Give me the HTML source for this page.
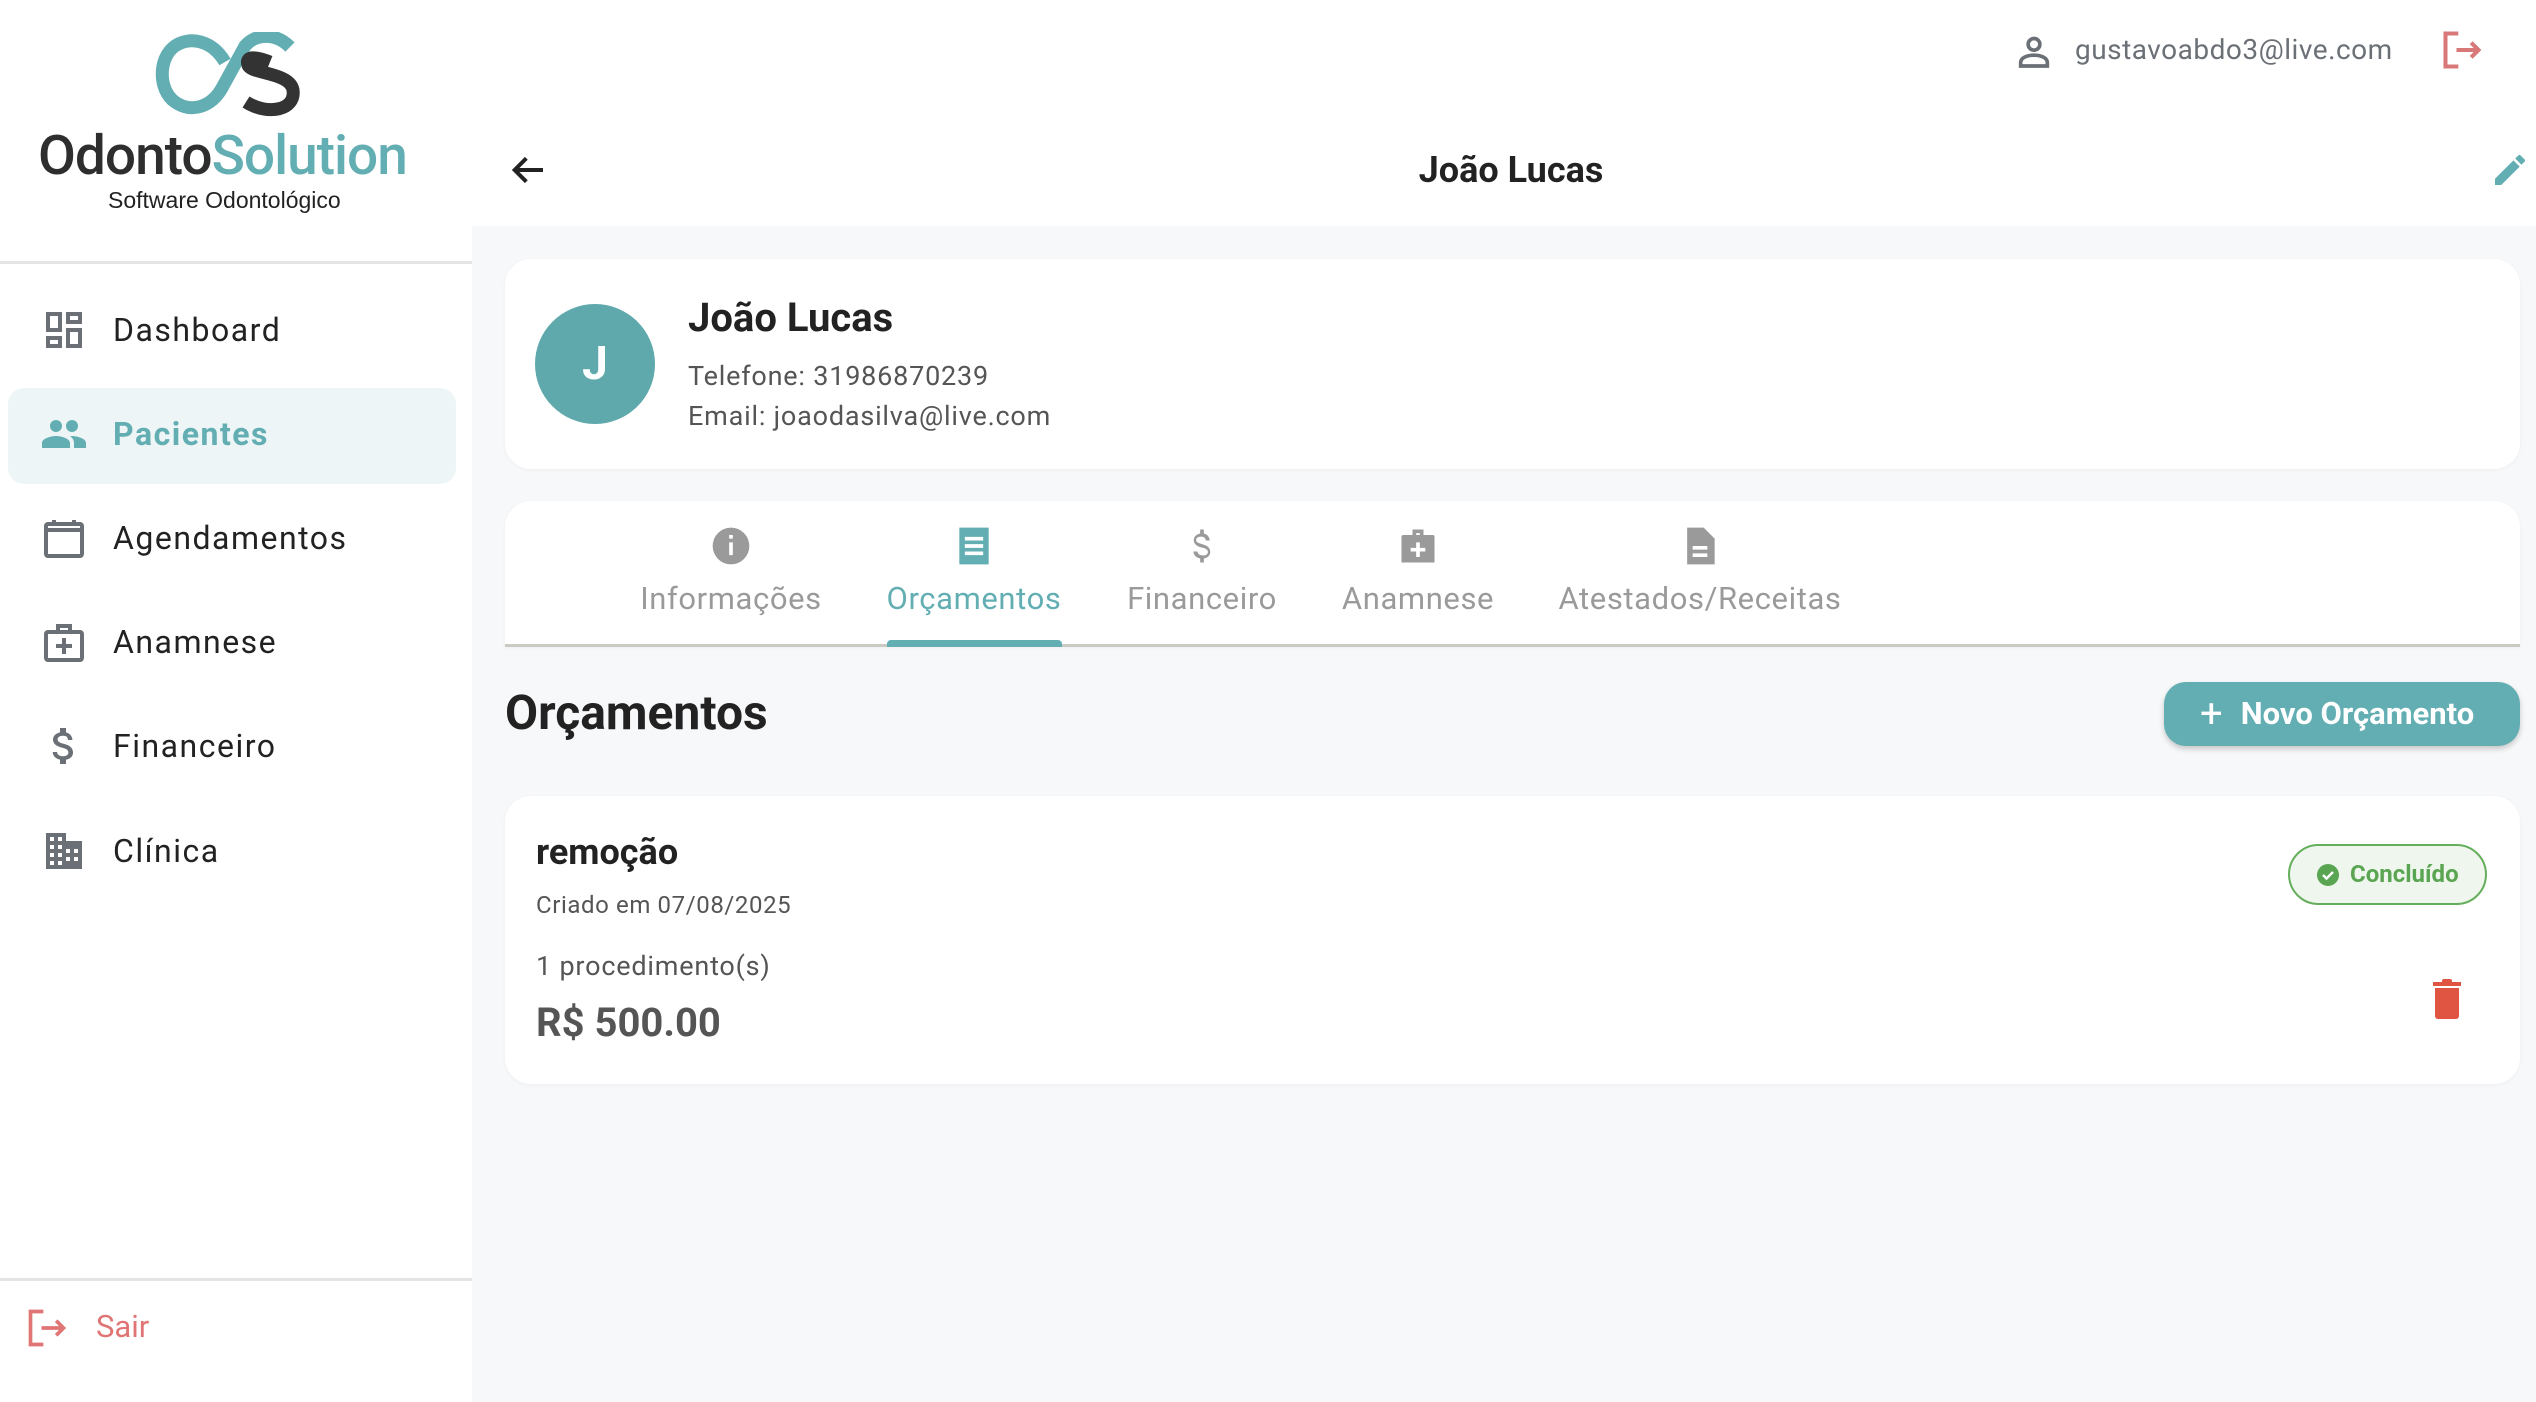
<!DOCTYPE html>
<html><head><meta charset="utf-8"><style>
*{box-sizing:border-box;margin:0;padding:0}
body{width:2536px;height:1402px;position:relative;overflow:hidden;background:#f7f8fa;font-family:"Roboto","Liberation Sans",sans-serif;color:#222}
.a{position:absolute}
#side{left:0;top:0;width:472px;height:1402px;background:#fff}
.nav{position:absolute;left:0;width:472px;height:96px;display:flex;align-items:center;font-size:32px;letter-spacing:1.5px;color:#222}
.nav svg{position:absolute;left:40px;width:48px;height:48px}
.nav span{position:absolute;left:113px}
.card{position:absolute;background:#fff;border-radius:26px;box-shadow:0 1px 4px rgba(0,0,0,.04)}
.tab{position:absolute;top:524px;width:400px;text-align:center;font-size:31px;letter-spacing:0.6px;color:#9a9a9a}
.tab svg{display:block;margin:0 auto 12px;width:44px;height:44px}
</style></head><body>
<div id="side" class="a">
 <svg class="a" style="left:150px;top:32px" width="150" height="85" viewBox="0 0 150 85">
  <path d="M75 30 C62 8 40 4 25 14 C8 26 8 58 25 70 C42 82 62 74 72 56 L95 14 C105 2 125 0 140 15" fill="none" stroke="#62AEB3" stroke-width="13"/>
  <path d="M120 30 C105 24 95 24 98 33 C100 42 140 40 143 58 C146 78 118 84 96 70" fill="none" stroke="#333" stroke-width="13"/>
 </svg>
 <div class="a" style="left:38px;top:124px;font-size:55px;font-weight:500;letter-spacing:-1px;line-height:64px"><span style="color:#2e2e2e">Odonto</span><span style="color:#62AEB3">Solution</span></div>
 <div class="a" style="left:108px;top:187px;font-size:23px;color:#222;font-family:'Liberation Sans',sans-serif">Software Odontológico</div>
 <div class="a" style="left:0;top:261px;width:472px;height:3px;background:#e4e4e4"></div>
 <div class="nav" style="top:282px"><svg viewBox="0 0 24 24" fill="none" stroke="#6b7077" stroke-width="2"><rect x="4" y="4" width="6" height="8"/><rect x="4" y="16" width="6" height="4"/><rect x="14" y="4" width="6" height="4"/><rect x="14" y="12" width="6" height="8"/></svg><span>Dashboard</span></div>
 <div class="a" style="left:8px;top:388px;width:448px;height:96px;border-radius:16px;background:#edf5f6"></div>
 <div class="nav" style="top:386px;color:#62AEB3;font-weight:bold"><svg viewBox="0 0 24 24" fill="#62AEB3"><path d="M16 11c1.66 0 3-1.34 3-3s-1.34-3-3-3-3 1.34-3 3 1.34 3 3 3zm-8 0c1.66 0 3-1.34 3-3S9.66 5 8 5 5 6.34 5 8s1.34 3 3 3zm0 2c-2.33 0-7 1.17-7 3.5V19h14v-2.5C15 14.17 10.33 13 8 13zm8 0c-.29 0-.62.02-.97.05 1.16.84 1.97 1.97 1.97 3.45V19h6v-2.5c0-2.33-4.67-3.5-7-3.5z"/></svg><span>Pacientes</span></div>
 <div class="nav" style="top:490px"><svg viewBox="0 0 24 24"><rect x="3" y="5" width="18" height="16" rx="1" fill="none" stroke="#6b7077" stroke-width="2"/><path d="M3 8h18M7 3v3M17 3v3" stroke="#6b7077" stroke-width="2"/></svg><span>Agendamentos</span></div>
 <div class="nav" style="top:594px"><svg viewBox="0 0 24 24"><rect x="3" y="7" width="18" height="14" rx="1" fill="none" stroke="#6b7077" stroke-width="2"/><path d="M9 7V4h6v3M12 10v8M8 14h8" fill="none" stroke="#6b7077" stroke-width="2"/></svg><span>Anamnese</span></div>
 <div class="nav" style="top:698px"><svg viewBox="0 0 24 24" fill="#6b7077"><path d="M11.8 10.9c-2.27-.59-3-1.2-3-2.15 0-1.09 1.01-1.85 2.7-1.85 1.78 0 2.44.85 2.5 2.1h2.21c-.07-1.72-1.12-3.3-3.21-3.81V3h-3v2.16c-1.94.42-3.5 1.68-3.5 3.61 0 2.31 1.91 3.46 4.7 4.13 2.5.6 3 1.48 3 2.41 0 .69-.49 1.79-2.7 1.79-2.06 0-2.87-.92-2.98-2.1h-2.2c.12 2.19 1.76 3.42 3.68 3.83V21h3v-2.15c1.95-.37 3.5-1.5 3.5-3.55 0-2.84-2.43-3.81-4.7-4.4z"/></svg><span>Financeiro</span></div>
 <div class="nav" style="top:803px"><svg viewBox="0 0 24 24" fill="#6b7077"><path d="M3 3h10v4h8v14H3zM5 5v2h2V5zm4 0v2h2V5zM5 9v2h2V9zm4 0v2h2V9zm4 2v2h2v-2zm4 0v2h2v-2zM5 13v2h2v-2zm4 0v2h2v-2zm4 2v2h2v-2zm4 0v2h2v-2zM5 17v2h2v-2zm4 0v2h2v-2z" fill-rule="evenodd"/></svg><span>Clínica</span></div>
 <div class="a" style="left:0;top:1278px;width:472px;height:3px;background:#e4e4e4"></div>
 <svg class="a" style="left:25px;top:1306px" width="44" height="44" viewBox="0 0 24 24" fill="none" stroke="#e07575" stroke-width="2"><path d="M10 3H3v18h7M9 12h12M17 8l4 4-4 4"/></svg>
 <div class="a" style="left:96px;top:1308px;font-size:31px;color:#e07575">Sair</div>
</div>
<div class="a" style="left:472px;top:0;width:2064px;height:226px;background:#fff"></div>
<svg class="a" style="left:2014px;top:31px" width="40" height="40" viewBox="0 0 24 24" fill="none" stroke="#6b7077" stroke-width="2.2"><circle cx="12" cy="8" r="3.5"/><path d="M4 21v-2c0-3 4-4.5 8-4.5s8 1.5 8 4.5v2z"/></svg>
<div class="a" style="left:2075px;top:33px;font-size:28px;letter-spacing:0.5px;color:#6b7077">gustavoabdo3@live.com</div>
<svg class="a" style="left:2440px;top:28px" width="44" height="44" viewBox="0 0 24 24" fill="none" stroke="#d97878" stroke-width="2.2"><path d="M10 3H3v18h7M9 12h12M17 8l4 4-4 4"/></svg>
<svg class="a" style="left:508px;top:150px" width="40" height="40" viewBox="0 0 24 24" fill="none" stroke="#222" stroke-width="2.4"><path d="M21 12H4M11 5l-7 7 7 7"/></svg>
<div class="a" style="left:1311px;top:149px;width:400px;text-align:center;font-size:36px;font-weight:bold;color:#222">João Lucas</div>
<svg class="a" style="left:2490px;top:150px" width="40" height="40" viewBox="0 0 24 24" fill="#62AEB3"><path d="M3 17.25V21h3.75L17.81 9.94l-3.75-3.75L3 17.25zM20.71 7.04a1 1 0 000-1.41l-2.34-2.34a1 1 0 00-1.41 0l-1.83 1.83 3.75 3.75 1.83-1.83z"/></svg>

<div class="card" style="left:505px;top:259px;width:2015px;height:210px"></div>
<div class="a" style="left:535px;top:304px;width:120px;height:120px;border-radius:50%;background:#5fa9ac;color:#fff;font-size:46px;font-weight:bold;text-align:center;line-height:120px">J</div>
<div class="a" style="left:688px;top:294px;font-size:40px;font-weight:bold;color:#222">João Lucas</div>
<div class="a" style="left:688px;top:360px;font-size:27px;letter-spacing:0.8px;color:#555">Telefone: 31986870239</div>
<div class="a" style="left:688px;top:400px;font-size:27px;letter-spacing:0.8px;color:#555">Email: joaodasilva@live.com</div>

<div class="card" style="left:505px;top:501px;width:2015px;height:146px;border-radius:26px 26px 0 0"></div>
<div class="a" style="left:505px;top:644px;width:2015px;height:3px;background:#c9cbc3"></div>
<div class="tab" style="left:531px"><svg viewBox="0 0 24 24" fill="#9a9a9a"><circle cx="12" cy="12" r="10"/><path d="M11 10h2v7h-2zM11 6h2v2h-2z" fill="#fff"/></svg>Informações</div>
<div class="tab" style="left:774px;color:#62AEB3"><svg viewBox="0 0 24 24" fill="#62AEB3"><path d="M4 2h16v20H4z"/><path d="M7 7h10v2H7zm0 4h10v2H7zm0 4h10v2H7z" fill="#fff"/></svg>Orçamentos</div>
<div class="tab" style="left:1002px"><svg viewBox="0 0 24 24" fill="#9a9a9a"><path d="M11.8 10.9c-2.27-.59-3-1.2-3-2.15 0-1.09 1.01-1.85 2.7-1.85 1.78 0 2.44.85 2.5 2.1h2.21c-.07-1.72-1.12-3.3-3.21-3.81V3h-2v2.16c-1.94.42-3.5 1.68-3.5 3.61 0 2.31 1.91 3.46 4.7 4.13 2.5.6 3 1.48 3 2.41 0 .69-.49 1.79-2.7 1.79-2.06 0-2.87-.92-2.98-2.1h-2.2c.12 2.19 1.76 3.42 3.68 3.83V21h2v-2.15c1.95-.37 3.5-1.5 3.5-3.55 0-2.84-2.43-3.81-4.7-4.4z"/></svg>Financeiro</div>
<div class="tab" style="left:1218px"><svg viewBox="0 0 24 24" fill="#9a9a9a"><path d="M9 3h6v3h5a1 1 0 011 1v14H3V7a1 1 0 011-1h5zm2 2v1h2V5z"/><path d="M11 10h2v3h3v2h-3v3h-2v-3H8v-2h3z" fill="#fff"/></svg>Anamnese</div>
<div class="tab" style="left:1500px"><svg viewBox="0 0 24 24" fill="#9a9a9a"><path d="M5 2h9l6 6v14H5z"/><path d="M8 12h8v2H8zm0 4h8v2H8z" fill="#fff"/></svg>Atestados/Receitas</div>
<div class="a" style="left:887px;top:640px;width:175px;height:7px;border-radius:4px 4px 0 0;background:#62AEB3"></div>

<div class="a" style="left:505px;top:684px;font-size:48px;font-weight:bold;color:#222">Orçamentos</div>
<div class="a" style="left:2164px;top:682px;width:356px;height:64px;border-radius:22px;background:#62AEB3;box-shadow:0 3px 6px rgba(0,0,0,.2);color:#fff;font-size:31px;font-weight:bold;line-height:64px;padding-left:36px"><span style="font-weight:normal;font-size:40px;vertical-align:-3px;margin-right:18px">+</span>Novo Orçamento</div>

<div class="card" style="left:505px;top:796px;width:2015px;height:288px"></div>
<div class="a" style="left:536px;top:831px;font-size:36px;font-weight:bold;color:#222">remoção</div>
<div class="a" style="left:536px;top:891px;font-size:24px;letter-spacing:0.6px;color:#555">Criado em 07/08/2025</div>
<div class="a" style="left:536px;top:950px;font-size:27px;letter-spacing:0.8px;color:#555">1 procedimento(s)</div>
<div class="a" style="left:536px;top:999px;font-size:40px;font-weight:bold;color:#555">R$ 500.00</div>
<div class="a" style="left:2288px;top:844px;width:199px;height:61px;border:2px solid #64ae5c;border-radius:31px;background:#eff6ee;color:#5aa552;font-size:24px;font-weight:bold;line-height:57px;padding-left:60px">Concluído
 <svg class="a" style="left:26px;top:17px" width="24" height="24" viewBox="0 0 24 24"><circle cx="12" cy="12" r="11" fill="#5aa552"/><path d="M7 12l3.5 3.5L17 9" fill="none" stroke="#fff" stroke-width="2.4"/></svg></div>
<svg class="a" style="left:2432px;top:979px" width="30" height="40" viewBox="0 0 30 40" fill="#e05442"><rect x="1" y="3" width="28" height="4"/><rect x="10" y="0" width="10" height="4" rx="2"/><path d="M3 9h24v28a3 3 0 01-3 3H6a3 3 0 01-3-3z"/></svg>
</body></html>
